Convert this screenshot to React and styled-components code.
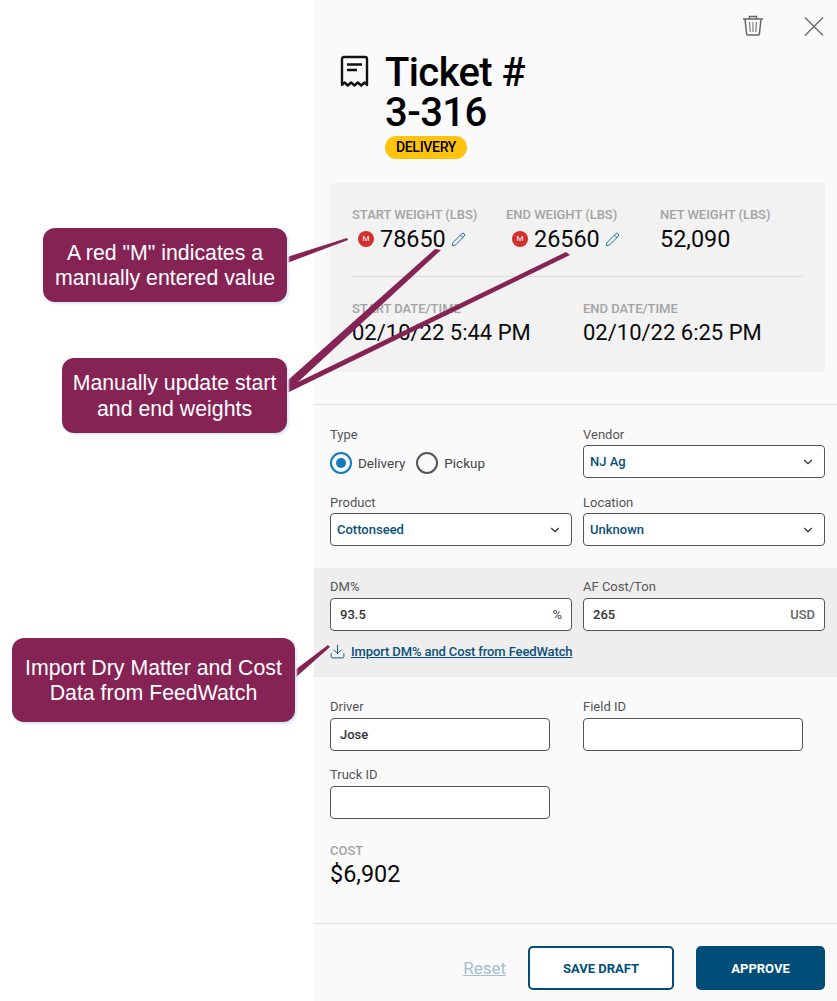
import styled, { createGlobalStyle } from 'styled-components'
import { Pencil, ChevronDown, Download } from 'lucide-react'

const Global = createGlobalStyle`
  html, body { margin: 0; padding: 0; background: #fff; }
  body { font-family: Roboto, "Liberation Sans", sans-serif; color: #000; }
  * { box-sizing: border-box; }
`

const Page = styled.div`
  position: relative;
  width: 837px;
  height: 1001px;
  overflow: hidden;
  display: flex;
  justify-content: flex-end;
`

const Panel = styled.div`
  width: 523px;
  height: 1001px;
  background: #fafafa;
  display: flex;
  flex-direction: column;
`

const TopBar = styled.div`
  height: 38px;
  padding: 15px 13px 0 0;
  display: flex;
  justify-content: flex-end;
  gap: 40px;
`

const TitleRow = styled.div`
  display: flex;
  gap: 16px;
  padding: 15px 0 0 26px;
  height: 145px;
`

const ReceiptWrap = styled.div`
  width: 29px;
  padding-top: 2px;
`

const TitleCol = styled.div`
  display: flex;
  flex-direction: column;
  align-items: flex-start;
`

const Title = styled.h1`
  margin: 0;
  font-size: 40px;
  line-height: 40px;
  font-weight: 500;
  letter-spacing: -0.6px;
  width: 150px;
`

const Badge = styled.span`
  margin-top: 3px;
  height: 23px;
  width: 82px;
  border-radius: 12px;
  background: #ffc20e;
  font-size: 14px;
  font-weight: 500;
  line-height: 23px;
  text-align: center;
  letter-spacing: -0.3px;
`

const StatLabel = styled.div`
  font-size: 13px;
  line-height: 16px;
  font-weight: 500;
  color: #a3a3a3;
  letter-spacing: -0.03px;
  white-space: nowrap;
`

const StatValue = styled.div`
  display: flex;
  align-items: center;
  font-size: 23.4px;
  line-height: 26px;
  margin-top: 3px;
  color: #0a0a0a;
  white-space: nowrap;
`

const Summary = styled.section`
  margin-left: 16px;
  width: 495px;
  height: 189px;
  background: #f2f2f2;
  border-radius: 4px;
  padding: 24px 22px 0;
`

const WeightRow = styled.div`
  display: grid;
  grid-template-columns: 154px 154px 1fr;
  height: 70px;
  border-bottom: 1px solid #dcdcdc;
`

const DateRow = styled.div`
  display: grid;
  grid-template-columns: 231px 1fr;
  padding-top: 24px;
  ${StatValue} { font-size: 22px; }
`

const Manual = styled.span`
  width: 16px;
  height: 16px;
  margin: 0 6px 0 6px;
  border-radius: 50%;
  background: #d32f2f;
  color: #fff;
  font-size: 8px;
  line-height: 16px;
  text-align: center;
`

const EditIcon = styled(Pencil)`
  margin-left: 5px;
  color: #1f6f9c;
`

const Rule = styled.hr`
  margin: ${p => p.$flush ? '0' : '32px 0 0'};
  border: 0;
  border-top: 1px solid #e2e2e2;
  width: 100%;
`

const FieldLabel = styled.label`
  font-size: 13px;
  line-height: 16px;
  height: 18px;
  color: #555;
  white-space: nowrap;
`

const FormGrid = styled.div`
  display: grid;
  grid-template-columns: ${p => p.$narrow ? '220px 220px' : '242px 242px'};
  column-gap: ${p => p.$narrow ? '33px' : '11px'};
  row-gap: 12px;
  padding: ${p => p.$pad || '0 16px'};
  ${FieldLabel} { height: ${p => p.$labelH || 18}px; }
`

const Field = styled.div`
  display: flex;
  flex-direction: column;
  min-height: 56px;
`

const Box = styled.div`
  height: 33px;
  background: #fff;
  border: 1px solid #555;
  border-radius: 4px;
  display: flex;
  align-items: center;
  justify-content: space-between;
  padding: ${p => p.$input ? '0 9px 0 9px' : '0 9px 0 6px'};
  font-size: 13px;
  font-weight: 500;
  color: ${p => p.$input ? '#333' : '#0b5078'};
`

const Suffix = styled.span`
  color: #666;
  font-weight: 500;
`

const RadioRow = styled.div`
  display: flex;
  align-items: center;
  height: 28px;
  margin-top: 4px;
`

const Radio = styled.span`
  width: 22px;
  height: 22px;
  border-radius: 50%;
  border: 2px solid ${p => p.$on ? '#0f7bbd' : '#555'};
  display: flex;
  align-items: center;
  justify-content: center;
  margin-right: 6px;
  &::after {
    content: '';
    width: 10px;
    height: 10px;
    border-radius: 50%;
    background: ${p => p.$on ? '#0f7bbd' : 'transparent'};
  }
`

const RadioText = styled.span`
  font-size: 13.5px;
  color: #444;
  margin-right: 11px;
`

const Band = styled.div`
  margin-top: 17px;
  height: 109px;
  background: #eee;
  padding-top: 11px;
`

const ImportRow = styled.div`
  display: flex;
  align-items: center;
  gap: 5px;
  padding: 9px 0 0 15px;
  height: 24px;
  color: #0b5078;
`

const ImportLink = styled.a`
  font-size: 13px;
  font-weight: 500;
  color: #0b5078;
  text-decoration: underline;
  letter-spacing: -0.12px;
`

const CostBlock = styled.div`
  padding: 0 16px;
  margin-top: 20px;
  height: 80px;
  ${StatValue} { margin-top: 2px; }
`

const Footer = styled.div`
  margin-top: 22px;
  display: flex;
  justify-content: flex-end;
  align-items: center;
  padding-right: 12px;
`

const Reset = styled.a`
  font-size: 17px;
  color: #a3bfd0;
  text-decoration: underline;
  margin-right: 22px;
`

const Button = styled.button`
  height: 44px;
  width: ${p => p.$primary ? '129px' : '146px'};
  margin-left: ${p => p.$primary ? '22px' : '0'};
  border: 2px solid #004e78;
  border-radius: 5px;
  background: ${p => p.$primary ? '#004e78' : '#fff'};
  color: ${p => p.$primary ? '#fff' : '#004e78'};
  font-family: inherit;
  font-size: 13px;
  font-weight: 700;
`

const Callout = styled.div`
  position: absolute;
  left: ${p => p.$x}px;
  top: ${p => p.$y}px;
  width: ${p => p.$w}px;
  height: ${p => p.$h}px;
  padding-top: 2px;
  background: #862355;
  border-radius: 12px;
  box-shadow: 2px 2px 2px #dbe9f6;
  color: #fff;
  font-family: "Liberation Sans", Arial, sans-serif;
  font-size: 21.3px;
  line-height: 25.5px;
  display: flex;
  align-items: center;
  justify-content: center;
  text-align: center;
`

const Leaders = styled.svg`
  position: absolute;
  left: 0;
  top: 0;
  pointer-events: none;
`

const CloseIcon = styled.svg`
  margin-top: 2px;
`

function ReceiptIcon() {
  return (
    <svg width="29" height="33" viewBox="0 0 29 33" fill="none" stroke="#111" strokeWidth="2.4" strokeLinejoin="round">
      <path d="M2 30V4a2 2 0 0 1 2-2h21a2 2 0 0 1 2 2v26l-2.5-2.5-3.3 3-3.4-3-3.3 3-3.4-3-3.3 3-3.3-3z" />
      <path d="M7 9.5h15M7 15h10" />
    </svg>
  )
}

function TrashIcon() {
  return (
    <svg width="22" height="21" viewBox="0 0 22 21" fill="none" stroke="#666" strokeWidth="1.5">
      <path d="M1 4h20M7.5 4V1.5h7V4" />
      <path d="M3 4l1.6 15a1 1 0 0 0 1 1h10.8a1 1 0 0 0 1-1L19 4" />
      <path d="M7.6 7l.6 10M11 7v10M14.4 7l-.6 10" strokeWidth="1" />
    </svg>
  )
}

function Select({ value }) {
  return (
    <Box>
      {value}
      <ChevronDown size={14} color="#333" strokeWidth={2} />
    </Box>
  )
}

function Stat({ label, value, manual }) {
  return (
    <div>
      <StatLabel>{label}</StatLabel>
      <StatValue>
        {manual && <Manual>M</Manual>}
        {value}
        {manual && <EditIcon size={15} strokeWidth={1.6} />}
      </StatValue>
    </div>
  )
}

export default function App() {
  return (
    <Page>
      <Global />
      <Panel>
        <TopBar>
          <TrashIcon />
          <CloseIcon width="20" height="19" viewBox="0 0 20 19" stroke="#666" strokeWidth="1.3" fill="none">
            <path d="M1 .5l18 18M19 .5l-18 18" />
          </CloseIcon>
        </TopBar>
        <TitleRow>
          <ReceiptWrap><ReceiptIcon /></ReceiptWrap>
          <TitleCol>
            <Title>Ticket # 3-316</Title>
            <Badge>DELIVERY</Badge>
          </TitleCol>
        </TitleRow>

        <Summary>
          <WeightRow>
            <Stat label="START WEIGHT (LBS)" value="78650" manual />
            <Stat label="END WEIGHT (LBS)" value="26560" manual />
            <Stat label="NET WEIGHT (LBS)" value="52,090" />
          </WeightRow>
          <DateRow>
            <Stat label="START DATE/TIME" value="02/10/22 5:44 PM" />
            <Stat label="END DATE/TIME" value="02/10/22 6:25 PM" />
          </DateRow>
        </Summary>

        <Rule />

        <FormGrid $pad="22px 12px 0 16px">
          <Field>
            <FieldLabel>Type</FieldLabel>
            <RadioRow>
              <Radio $on />
              <RadioText>Delivery</RadioText>
              <Radio />
              <RadioText>Pickup</RadioText>
            </RadioRow>
          </Field>
          <Field>
            <FieldLabel>Vendor</FieldLabel>
            <Select value="NJ Ag" />
          </Field>
          <Field>
            <FieldLabel>Product</FieldLabel>
            <Select value="Cottonseed" />
          </Field>
          <Field>
            <FieldLabel>Location</FieldLabel>
            <Select value="Unknown" />
          </Field>
        </FormGrid>

        <Band>
          <FormGrid $labelH={19}>
            <Field>
              <FieldLabel>DM%</FieldLabel>
              <Box $input>93.5<Suffix>%</Suffix></Box>
            </Field>
            <Field>
              <FieldLabel>AF Cost/Ton</FieldLabel>
              <Box $input>265<Suffix>USD</Suffix></Box>
            </Field>
          </FormGrid>
          <ImportRow>
            <Download size={17} strokeWidth={1.3} />
            <ImportLink>Import DM% and Cost from FeedWatch</ImportLink>
          </ImportRow>
        </Band>

        <FormGrid $narrow $labelH={19} $pad="22px 16px 0">
          <Field>
            <FieldLabel>Driver</FieldLabel>
            <Box $input>Jose</Box>
          </Field>
          <Field>
            <FieldLabel>Field ID</FieldLabel>
            <Box $input />
          </Field>
          <Field>
            <FieldLabel>Truck ID</FieldLabel>
            <Box $input />
          </Field>
        </FormGrid>

        <CostBlock>
          <StatLabel>COST</StatLabel>
          <StatValue>$6,902</StatValue>
        </CostBlock>

        <Rule $flush />

        <Footer>
          <Reset>Reset</Reset>
          <Button>SAVE DRAFT</Button>
          <Button $primary>APPROVE</Button>
        </Footer>
      </Panel>

      <Leaders width="837" height="1001" viewBox="0 0 837 1001">
        <g fill="#862355">
          <polygon points="287,257 347,238 348,240 287,263" />
          <polygon points="287,381 435,249 441,250 298,382 566,252 570,255 287,393" />
          <polygon points="295,670 328,645 330,647 295,678" />
        </g>
      </Leaders>

      <Callout $x={43} $y={228} $w={244} $h={74}>A red "M" indicates a<br />manually entered value</Callout>
      <Callout $x={62} $y={358} $w={225} $h={75}>Manually update start<br />and end weights</Callout>
      <Callout $x={12} $y={638} $w={283} $h={84}>Import Dry Matter and Cost<br />Data from FeedWatch</Callout>
    </Page>
  )
}
